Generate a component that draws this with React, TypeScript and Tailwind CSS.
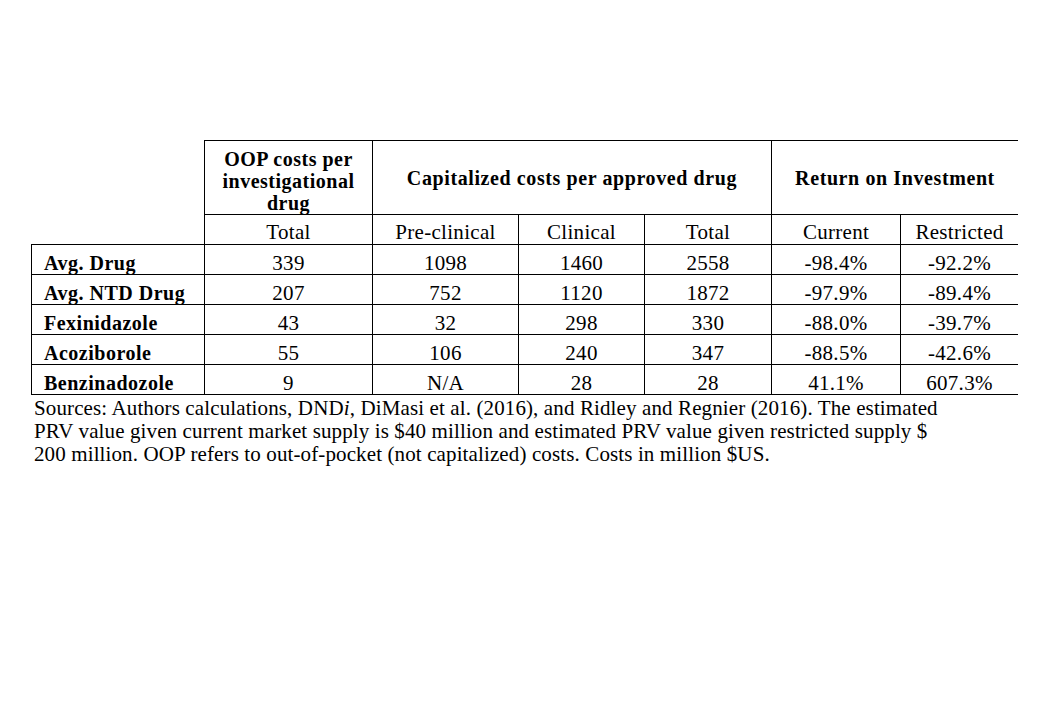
import React from "react";

const W = ["w-[173px]", "w-[168px]", "w-[146px]", "w-[126px]", "w-[127px]", "w-[129px]", "w-[118px]"];

const rows: string[][] = [
  ["Avg. Drug", "339", "1098", "1460", "2558", "-98.4%", "-92.2%"],
  ["Avg. NTD Drug", "207", "752", "1120", "1872", "-97.9%", "-89.4%"],
  ["Fexinidazole", "43", "32", "298", "330", "-88.0%", "-39.7%"],
  ["Acoziborole", "55", "106", "240", "347", "-88.5%", "-42.6%"],
  ["Benzinadozole", "9", "N/A", "28", "28", "41.1%", "607.3%"],
];

const sub = ["Total", "Pre-clinical", "Clinical", "Total", "Current", "Restricted"];

export default function App() {
  return (
    <div className="w-[1040px] h-[720px] bg-white text-black text-[21px] pt-[140px] pl-[31px]" style={{ fontFamily: '"Liberation Serif", "Times New Roman", serif' }}>
      <div className="w-[987px]">
        {/* header row */}
        <div className="flex h-[75px] text-[20px]">
          <div className="w-[173px]" />
          <div className="w-[168px] border-l border-t border-b border-black flex items-end justify-center text-center font-bold tracking-[0.5px] leading-[22px]">
            <div>
              OOP costs per
              <br />
              investigational
              <br />
              drug
            </div>
          </div>
          <div className="w-[399px] border-l border-t border-b border-black flex items-center justify-center font-bold tracking-[0.6px] leading-[22px] pt-[1px]">
            Capitalized costs per approved drug
          </div>
          <div className="w-[247px] border-l border-t border-b border-black flex items-center justify-center font-bold tracking-[0.6px] leading-[22px] pt-[1px]">
            Return on Investment
          </div>
        </div>
        {/* sub header row */}
        <div className="flex h-[30px]">
          <div className="w-[173px] border-b border-black" />
          {sub.map((s, i) => (
            <div key={i} className={`${W[i + 1]} border-l border-b border-black flex items-end justify-center pb-[4px] leading-[16px] tracking-[0.3px]`}>
              {s}
            </div>
          ))}
        </div>
        {/* data rows */}
        {rows.map((r, ri) => (
          <div key={ri} className="flex h-[30px]">
            {r.map((c, ci) => (
              <div
                key={ci}
                className={`${W[ci]} border-l border-b border-black flex items-end pb-[3px] leading-[16px] ${
                  ci === 0 ? "pl-[12px] font-bold tracking-[0.5px] text-[20px]" : "justify-center tracking-[0.3px]"
                }`}
              >
                {c}
              </div>
            ))}
          </div>
        ))}
      </div>
      <div className="pl-[3px] pt-[2px] leading-[23px] whitespace-nowrap tracking-[0.12px]">
        Sources: Authors calculations, DND<i>i</i>, DiMasi et al. (2016), and Ridley and Regnier (2016). The estimated
        <br />
        PRV value given current market supply is $40 million and estimated PRV value given restricted supply $
        <br />
        200 million. OOP refers to out-of-pocket (not capitalized) costs. Costs in million $US.
      </div>
    </div>
  );
}
